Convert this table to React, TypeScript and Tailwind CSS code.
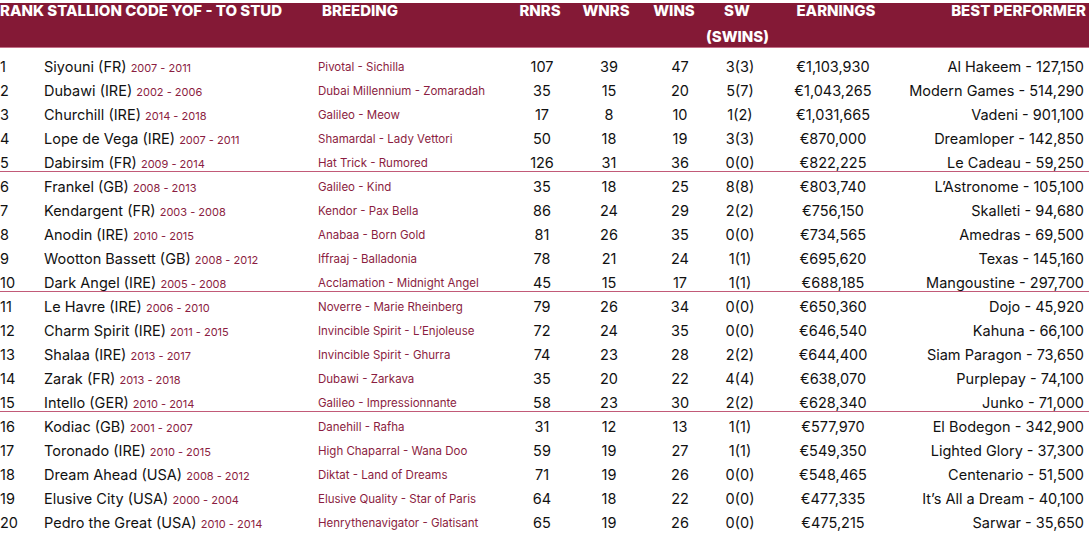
import React from "react";

type Row = [string, string, string, string, string, string, string, string, string, string];

const rows: Row[] = [
  ["1", "Siyouni (FR)", "2007 - 2011", "Pivotal - Sichilla", "107", "39", "47", "3(3)", "€1,103,930", "Al Hakeem - 127,150"],
  ["2", "Dubawi (IRE)", "2002 - 2006", "Dubai Millennium - Zomaradah", "35", "15", "20", "5(7)", "€1,043,265", "Modern Games - 514,290"],
  ["3", "Churchill (IRE)", "2014 - 2018", "Galileo - Meow", "17", "8", "10", "1(2)", "€1,031,665", "Vadeni - 901,100"],
  ["4", "Lope de Vega (IRE)", "2007 - 2011", "Shamardal - Lady Vettori", "50", "18", "19", "3(3)", "€870,000", "Dreamloper - 142,850"],
  ["5", "Dabirsim (FR)", "2009 - 2014", "Hat Trick - Rumored", "126", "31", "36", "0(0)", "€822,225", "Le Cadeau - 59,250"],
  ["6", "Frankel (GB)", "2008 - 2013", "Galileo - Kind", "35", "18", "25", "8(8)", "€803,740", "L’Astronome - 105,100"],
  ["7", "Kendargent (FR)", "2003 - 2008", "Kendor - Pax Bella", "86", "24", "29", "2(2)", "€756,150", "Skalleti - 94,680"],
  ["8", "Anodin (IRE)", "2010 - 2015", "Anabaa - Born Gold", "81", "26", "35", "0(0)", "€734,565", "Amedras - 69,500"],
  ["9", "Wootton Bassett (GB)", "2008 - 2012", "Iffraaj - Balladonia", "78", "21", "24", "1(1)", "€695,620", "Texas - 145,160"],
  ["10", "Dark Angel (IRE)", "2005 - 2008", "Acclamation - Midnight Angel", "45", "15", "17", "1(1)", "€688,185", "Mangoustine - 297,700"],
  ["11", "Le Havre (IRE)", "2006 - 2010", "Noverre - Marie Rheinberg", "79", "26", "34", "0(0)", "€650,360", "Dojo - 45,920"],
  ["12", "Charm Spirit (IRE)", "2011 - 2015", "Invincible Spirit - L’Enjoleuse", "72", "24", "35", "0(0)", "€646,540", "Kahuna - 66,100"],
  ["13", "Shalaa (IRE)", "2013 - 2017", "Invincible Spirit - Ghurra", "74", "23", "28", "2(2)", "€644,400", "Siam Paragon - 73,650"],
  ["14", "Zarak (FR)", "2013 - 2018", "Dubawi - Zarkava", "35", "20", "22", "4(4)", "€638,070", "Purplepay - 74,100"],
  ["15", "Intello (GER)", "2010 - 2014", "Galileo - Impressionnante", "58", "23", "30", "2(2)", "€628,340", "Junko - 71,000"],
  ["16", "Kodiac (GB)", "2001 - 2007", "Danehill - Rafha", "31", "12", "13", "1(1)", "€577,970", "El Bodegon - 342,900"],
  ["17", "Toronado (IRE)", "2010 - 2015", "High Chaparral - Wana Doo", "59", "19", "27", "1(1)", "€549,350", "Lighted Glory - 37,300"],
  ["18", "Dream Ahead (USA)", "2008 - 2012", "Diktat - Land of Dreams", "71", "19", "26", "0(0)", "€548,465", "Centenario - 51,500"],
  ["19", "Elusive City (USA)", "2000 - 2004", "Elusive Quality - Star of Paris", "64", "18", "22", "0(0)", "€477,335", "It’s All a Dream - 40,100"],
  ["20", "Pedro the Great (USA)", "2010 - 2014", "Henrythenavigator - Glatisant", "65", "19", "26", "0(0)", "€475,215", "Sarwar - 35,650"],
];

const cols = "grid grid-cols-[44px_274px_192px_64px_70px_72px_48px_138px_182px]";

export default function App() {
  return (
    <div className="w-[1089px] h-[552px] bg-white overflow-hidden text-[#111] font-['Inter','Liberation_Sans',sans-serif]">
      <div className="h-[50px] bg-[linear-gradient(to_bottom,#ffffff_5px,#841936_5px)] border-b border-[#c47088] text-white font-extrabold uppercase text-[15px] leading-[26px]">
        <div className={`${cols} -mt-[2px]`}>
          <div className="col-span-2 whitespace-nowrap">Rank Stallion Code YOF - To Stud</div>
          <div className="pl-[4px]">Breeding</div>
          <div className="text-center pr-[4px]">RNRS</div>
          <div className="text-center pr-[6px]">WNRS</div>
          <div className="text-center pr-[12px]">Wins</div>
          <div className="text-center whitespace-nowrap -ml-[10px] -mr-[4px] flex flex-col">
            <span>SW</span>
            <span>(SWINS)</span>
          </div>
          <div className="text-center pl-[6px]">Earnings</div>
          <div className="text-right -mr-[2px] whitespace-nowrap">Best Performer</div>
        </div>
      </div>
      <div className="mt-[4px]">
        {rows.map((r, i) => (
          <div
            key={r[0]}
            className={`${cols} h-[24px] pt-[6px] leading-[18px] text-[14.5px] ${
              i === 4 || i === 9 || i === 14 ? "border-b border-[#c25a78]" : ""
            }`}
          >
            <div>{r[0]}</div>
            <div className="whitespace-nowrap">
              {r[1]} <span className="text-[11px] text-[#8b1d41]">{r[2]}</span>
            </div>
            <div className="text-[11.5px] text-[#8b1d41] whitespace-nowrap">{r[3]}</div>
            <div className="text-center">{r[4]}</div>
            <div className="text-center">{r[5]}</div>
            <div className="text-center">{r[6]}</div>
            <div className="text-center">{r[7]}</div>
            <div className="text-center">{r[8]}</div>
            <div className="text-right whitespace-nowrap">{r[9]}</div>
          </div>
        ))}
      </div>
    </div>
  );
}
